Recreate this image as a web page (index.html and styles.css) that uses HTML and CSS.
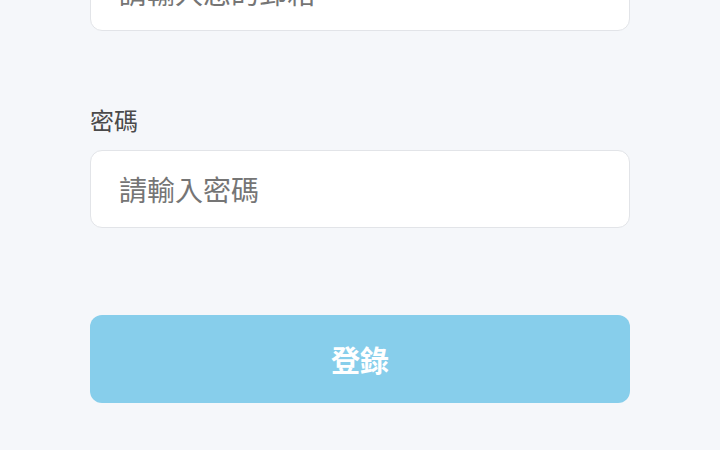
FILE: index.html
```html
<!DOCTYPE html>
<html lang="zh-Hant">
<head>
<meta charset="utf-8">
<title>登錄</title>
<link rel="stylesheet" href="styles.css">
</head>
<body>
<main class="page">
  <form class="form">
    <div class="field">
      <input class="input" type="email" placeholder="請輸入您的郵箱">
    </div>
    <div class="field">
      <label class="label">密碼</label>
      <input class="input" type="password" placeholder="請輸入密碼">
    </div>
    <button class="btn" type="button">登錄</button>
  </form>
</main>
</body>
</html>
```
FILE: styles.css
```css
html, body {
  margin: 0;
  padding: 0;
  background: #f5f7fa;
  font-family: "Noto Sans CJK TC", "Noto Sans", sans-serif;
  overflow: hidden;
}
.page {
  width: 540px;
  margin: -47px auto 0;
}
.form {
  display: flex;
  flex-direction: column;
}
.field {
  display: flex;
  flex-direction: column;
  margin-bottom: 75px;
}
.field + .field {
  margin-bottom: 87px;
}
.label {
  font-size: 24px;
  line-height: 28px;
  color: #4a4a4a;
  margin-bottom: 16px;
}
.input {
  box-sizing: border-box;
  height: 78px;
  width: 100%;
  padding: 0 28px;
  border: 1px solid #e2e4e8;
  border-radius: 12px;
  background: #fff;
  font-family: inherit;
  font-size: 28px;
  color: #333;
  outline: none;
}
.input::placeholder {
  color: #757575;
}
.btn {
  height: 88px;
  border: none;
  border-radius: 12px;
  background: #87ceeb;
  color: #fff;
  font-family: inherit;
  font-size: 29px;
  font-weight: 700;
}
```
